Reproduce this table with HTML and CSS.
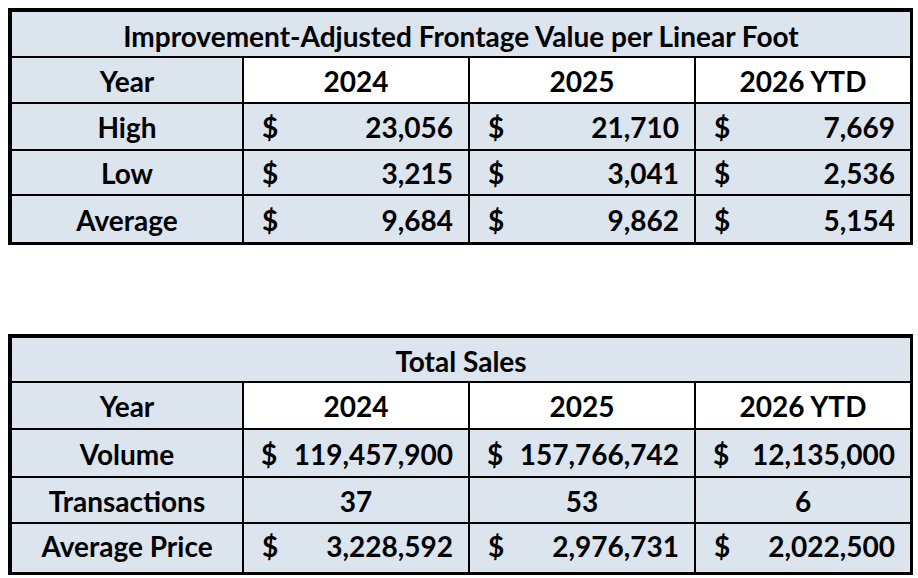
FILE: index.html
```html
<!DOCTYPE html>
<html>
<head>
<meta charset="utf-8">
<link rel="stylesheet" href="styles.css">
</head>
<body>
<div class="sheet">
  <div class="grid grid-frontage">
    <div class="cell title">Improvement-Adjusted Frontage Value per Linear Foot</div>
    <div class="cell label">Year</div>
    <div class="cell year">2024</div>
    <div class="cell year">2025</div>
    <div class="cell year">2026 YTD</div>

    <div class="cell label">High</div>
    <div class="cell money"><span>$</span><span>23,056</span></div>
    <div class="cell money"><span>$</span><span>21,710</span></div>
    <div class="cell money"><span>$</span><span>7,669</span></div>

    <div class="cell label">Low</div>
    <div class="cell money"><span>$</span><span>3,215</span></div>
    <div class="cell money"><span>$</span><span>3,041</span></div>
    <div class="cell money"><span>$</span><span>2,536</span></div>

    <div class="cell label">Average</div>
    <div class="cell money"><span>$</span><span>9,684</span></div>
    <div class="cell money"><span>$</span><span>9,862</span></div>
    <div class="cell money"><span>$</span><span>5,154</span></div>
  </div>

  <div class="grid grid-sales">
    <div class="cell title">Total Sales</div>
    <div class="cell label">Year</div>
    <div class="cell year">2024</div>
    <div class="cell year">2025</div>
    <div class="cell year">2026 YTD</div>

    <div class="cell label">Volume</div>
    <div class="cell money tight"><span>$</span><span>119,457,900</span></div>
    <div class="cell money tight"><span>$</span><span>157,766,742</span></div>
    <div class="cell money tight"><span>$</span><span>12,135,000</span></div>

    <div class="cell label">Transactions</div>
    <div class="cell center">37</div>
    <div class="cell center">53</div>
    <div class="cell center">6</div>

    <div class="cell label last">Average Price</div>
    <div class="cell money last"><span>$</span><span>3,228,592</span></div>
    <div class="cell money last"><span>$</span><span>2,976,731</span></div>
    <div class="cell money last"><span>$</span><span>2,022,500</span></div>
  </div>
</div>
</body>
</html>
```

FILE: styles.css
```css
html, body {
  margin: 0;
  padding: 0;
  background: #ffffff;
}

body {
  padding: 8px;
  font-family: "Lato", "Open Sans", sans-serif;
  font-weight: 700;
  font-size: 28px;
  color: #000000;
}

.sheet {
  display: flex;
  flex-direction: column;
  gap: 89px;
}

.grid {
  display: grid;
  width: 905px;
  box-sizing: border-box;
  border-style: solid;
  border-color: #000;
  border-width: 4px 3px 3px 4px;
  background: #000;
  grid-template-columns: 230px 224px 224px 214px;
  column-gap: 2px;
  row-gap: 2px;
}

.grid-frontage {
  grid-template-rows: 44px 44px 45px 43px 46px;
}

.grid-sales {
  grid-template-rows: 43px 45px 46px 44px 48px;
}

.cell {
  background: #dce4ee;
  display: flex;
  align-items: center;
  justify-content: center;
  white-space: nowrap;
  line-height: 1;
  padding-top: 1px;
}

.title {
  grid-column: 1 / -1;
  padding-top: 3px;
}

.year {
  background: #ffffff;
}

.money {
  justify-content: space-between;
  padding: 1px 15px 0 18px;
}

.money.tight {
  padding-left: 17px;
}

.last {
  padding-top: 0;
  padding-bottom: 4px;
}
```
